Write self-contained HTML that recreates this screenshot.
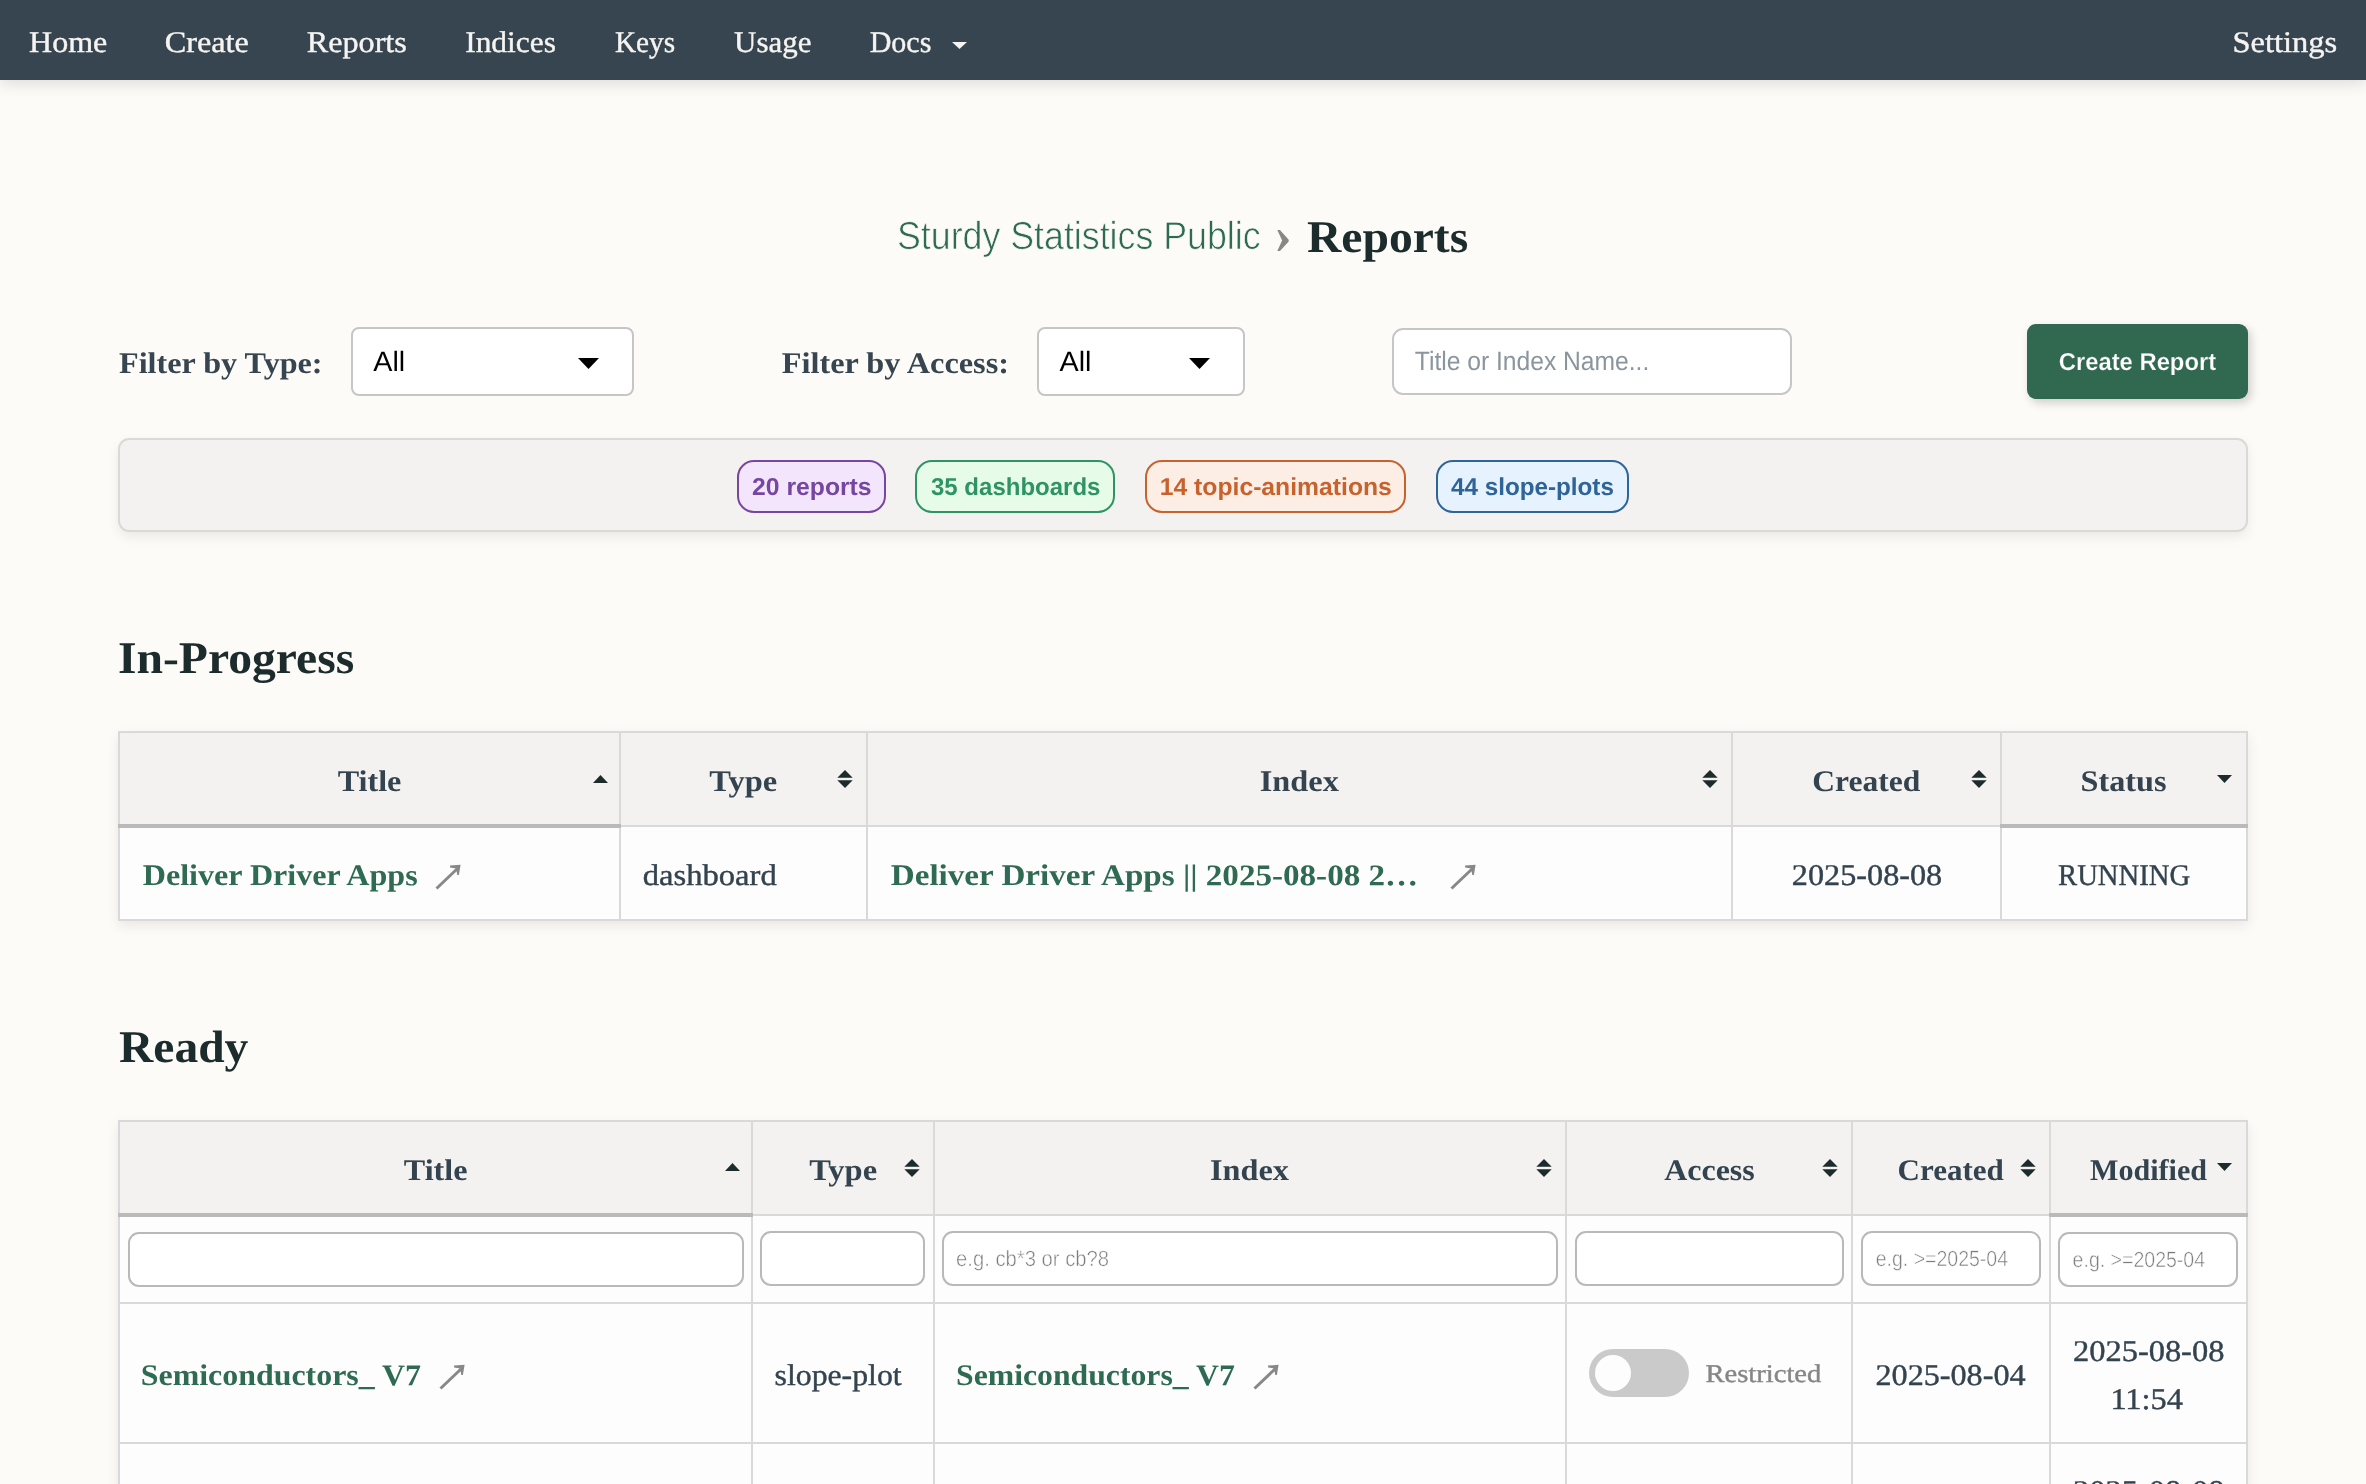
<!DOCTYPE html>
<html lang="en">
<head>
<meta charset="utf-8">
<title>Reports - Sturdy Statistics Public</title>
<style>
*{box-sizing:border-box;margin:0;padding:0}
html,body{width:2366px;height:1484px;overflow:hidden}
html{background:#fcfbf8}
body{background:transparent;will-change:transform;font-family:"Liberation Serif",serif;font-size:30px;color:#33434f;position:relative}
a{text-decoration:none;color:inherit}
.sans{font-family:"Liberation Sans",sans-serif}

/* NAV */
nav{position:absolute;left:0;top:0;width:2366px;height:80px;background:#36454f;box-shadow:0 4px 14px rgba(0,0,0,.12);color:#f6f4f1;z-index:5}
nav a{position:absolute;top:2px;line-height:80px;font-size:30px;white-space:nowrap;-webkit-text-stroke:0.4px #f6f4f1}
nav svg{position:absolute;left:952px;top:42px}

/* TITLE */
.crumb{position:absolute;left:0;top:200px;width:2366px;height:80px;font-weight:normal}
.crumb .org{position:absolute;left:897px;top:0.5px;line-height:70px;font-size:39px;color:#2e6b52;-webkit-text-stroke:0.7px #fcfbf8;font-family:"Liberation Sans",sans-serif;white-space:nowrap}
.crumb .chev{position:absolute;left:1274px;top:0px;line-height:70px;font-size:54px;color:#888;font-weight:bold}
.crumb .cur{position:absolute;left:1306px;top:1.7px;line-height:70px;font-size:45.3px;font-weight:bold;color:#1c2b2b;white-space:nowrap}

/* FILTERS */
.flabel{position:absolute;top:328.5px;line-height:68px;font-weight:bold;font-size:30px;color:#36454f;white-space:nowrap}
.select{position:absolute;top:327px;height:69px;border:2px solid #c6c6c6;border-radius:8px;background:#fff;font-family:"Liberation Sans",sans-serif;font-size:28px;color:#000;line-height:65px;padding-left:20px}
.select svg{position:absolute;top:29px}
.search{position:absolute;left:1392px;top:328px;width:400px;height:67px;border:2px solid #c6c6c6;border-radius:11px;background:#fff;font-family:"Liberation Sans",sans-serif;font-size:26.5px;color:#8a959d;line-height:63px;padding-left:21px;white-space:nowrap}
.btn{position:absolute;left:2027px;top:324px;width:221px;height:75px;border-radius:9px;background:#306850;color:#fff;font-family:"Liberation Sans",sans-serif;font-weight:bold;font-size:24.5px;line-height:75px;text-align:center;box-shadow:3px 4px 10px rgba(0,0,0,.18);white-space:nowrap;-webkit-text-stroke:0.2px #306850}

/* BADGE PANEL */
.panel{position:absolute;left:118px;top:438px;width:2130px;height:94px;border:2px solid #dad9d8;border-radius:11px;background:#f4f2f0;box-shadow:0 5px 12px rgba(0,0,0,.07)}
.badge{position:absolute;top:20px;height:53px;border:2px solid;border-radius:17px;font-family:"Liberation Sans",sans-serif;font-weight:bold;font-size:24.5px;line-height:49px;text-align:center;white-space:nowrap}
.b1{left:617px;width:149px;color:#7646a0;border-color:#7646a0;background:#f3e6fc}
.b2{left:795px;width:200px;color:#2f9464;border-color:#2f9464;background:#e6fce9}
.b3{left:1025px;width:261px;color:#c8622c;border-color:#c8622c;background:#fdeee5}
.b4{left:1316px;width:193px;color:#2f6497;border-color:#2f6497;background:#e6f2fe}

h2{position:absolute;left:118px;font-size:45.3px;font-weight:bold;color:#1c2b2b;line-height:60px;white-space:nowrap}

/* TABLES */
table{position:absolute;left:118px;width:2130px;border-collapse:separate;border-spacing:0;border-left:2px solid #d9d9d9;border-top:2px solid #d9d9d9;box-shadow:0 5px 12px rgba(0,0,0,.08);table-layout:fixed;background:#fdfdfd}
th,td{border-right:2px solid #d9d9d9;border-bottom:2px solid #d9d9d9;vertical-align:middle;position:relative;white-space:nowrap}
th{background:#f4f2f0;height:94px;padding-top:3px;font-weight:bold;font-size:30px;color:#33434f;text-align:center}
th.sorted::after{content:'';position:absolute;left:-2px;right:-2px;bottom:-3px;height:4px;background:#bababa;z-index:2}
th svg{position:absolute}
td{font-size:30px;color:#33434f;padding-top:4px;-webkit-text-stroke:0.4px #33434f}
td.l{text-align:left;padding-left:23px}
td.c{text-align:center}
td a{color:#2e6b52;font-weight:bold;font-size:30px;-webkit-text-stroke:0}
td svg.arr{position:absolute}
.finput{position:absolute;left:8px;right:8px;top:15px;height:55px;border:2px solid #b9b9b9;border-radius:11px;background:#fff;font-family:"Liberation Sans",sans-serif;font-size:22px;color:#7d7d7d;line-height:51px;padding-left:13px;text-align:left;-webkit-text-stroke:0.5px #fff}
.toggle{position:absolute;left:22px;top:45px;width:100px;height:48px;border-radius:24px;background:#cacaca}
.toggle i{position:absolute;left:6px;top:6px;width:36px;height:36px;border-radius:50%;background:#fdfdfd}
.tlabel{position:absolute;left:138px;top:1px;line-height:138px;color:#868686;font-size:25.5px;-webkit-text-stroke:0.4px #868686}
/*CAL*/
#n1{display:inline-block;transform-origin:left center;transform:translateX(0.1px) rotate(0.03deg) scaleX(1.0664)}
#n2{display:inline-block;transform-origin:left center;transform:translateX(-0.2px) rotate(0.03deg) scaleX(1.074)}
#n3{display:inline-block;transform-origin:left center;transform:translateX(-0.2px) rotate(0.03deg) scaleX(1.0714)}
#n4{display:inline-block;transform-origin:left center;transform:translateX(1.2px) rotate(0.03deg) scaleX(1.0471)}
#n5{display:inline-block;transform-origin:left center;transform:translateX(1.0px) rotate(0.03deg) scaleX(0.9747)}
#n6{display:inline-block;transform-origin:left center;transform:translateX(1.1px) rotate(0.03deg) scaleX(1.0308)}
#n7{display:inline-block;transform-origin:left center;transform:translateX(0.7px) rotate(0.03deg) scaleX(0.9992)}
#n8{display:inline-block;transform-origin:left center;transform:translateX(-0.5px) rotate(0.03deg) scaleX(1.0835)}
#org{display:inline-block;transform-origin:left center;transform:translateX(0.0px) rotate(0.03deg) scaleX(0.9166)}
#cur{display:inline-block;transform-origin:left center;transform:translateX(0.9px) rotate(0.03deg) scaleX(1.0511)}
#fl1{display:inline-block;transform-origin:left center;transform:translateX(1.0px) rotate(0.03deg) scaleX(1.0714)}
#fl2{display:inline-block;transform-origin:left center;transform:translateX(0.8px) rotate(0.03deg) scaleX(1.0764)}
#sel1{display:inline-block;transform-origin:left center;transform:translateX(0.3px) rotate(0.03deg) scaleX(1.023)}
#sel2{display:inline-block;transform-origin:left center;transform:translateX(0.5px) rotate(0.03deg) scaleX(1.0275)}
#ph{display:inline-block;transform-origin:left center;transform:translateX(-0.2px) rotate(0.03deg) scaleX(0.9292)}
#btn{display:inline-block;transform-origin:center center;transform:translateX(0.45px) rotate(0.03deg) scaleX(0.971)}
#bd1{display:inline-block;transform-origin:center center;transform:translateX(0.6px) rotate(0.03deg) scaleX(1.0085)}
#bd2{display:inline-block;transform-origin:center center;transform:translateX(0.25px) rotate(0.03deg) scaleX(0.9797)}
#bd3{display:inline-block;transform-origin:center center;transform:translateX(0.75px) rotate(0.03deg) scaleX(1.0089)}
#bd4{display:inline-block;transform-origin:center center;transform:translateX(0.1px) rotate(0.03deg) scaleX(0.989)}
#h2a{display:inline-block;transform-origin:left center;transform:translateX(0.0px) rotate(0.03deg) scaleX(1.0506)}
#t1h1{display:inline-block;transform-origin:center center;transform:translateX(-0.2px) rotate(0.03deg) scaleX(1.0724)}
#t1h2{display:inline-block;transform-origin:center center;transform:translateX(-0.1px) rotate(0.03deg) scaleX(1.082)}
#t1h3{display:inline-block;transform-origin:center center;transform:translateX(-0.4px) rotate(0.03deg) scaleX(1.0772)}
#t1h4{display:inline-block;transform-origin:center center;transform:translateX(-0.1px) rotate(0.03deg) scaleX(1.0507)}
#t1h5{display:inline-block;transform-origin:center center;transform:translateX(-0.45px) rotate(0.03deg) scaleX(1.0736)}
#t1a{display:inline-block;transform-origin:left center;transform:translateX(-0.2px) rotate(0.03deg) scaleX(1.0687)}
#t1b{display:inline-block;transform-origin:left center;transform:translateX(-1.2px) rotate(0.03deg) scaleX(1.0861)}
#t1c{display:inline-block;transform-origin:left center;transform:translateX(-0.2px) rotate(0.03deg) scaleX(1.1036)}
#t1d{display:inline-block;transform-origin:center center;transform:translateX(0.05px) rotate(0.03deg) scaleX(1.074)}
#t1e{display:inline-block;transform-origin:center center;transform:translateX(0.0px) rotate(0.03deg) scaleX(0.9563)}
#h2b{display:inline-block;transform-origin:left center;transform:translateX(1.0px) rotate(0.03deg) scaleX(1.0487)}
#t2h1{display:inline-block;transform-origin:center center;transform:translateX(-0.05px) rotate(0.03deg) scaleX(1.0705)}
#t2h2{display:inline-block;transform-origin:center center;transform:translateX(-0.3px) rotate(0.03deg) scaleX(1.0817)}
#t2h3{display:inline-block;transform-origin:center center;transform:translateX(-0.25px) rotate(0.03deg) scaleX(1.0742)}
#t2h4{display:inline-block;transform-origin:center center;transform:translateX(0.0px) rotate(0.03deg) scaleX(1.065)}
#t2h5{display:inline-block;transform-origin:center center;transform:translateX(-0.7px) rotate(0.03deg) scaleX(1.0341)}
#t2h6{display:inline-block;transform-origin:center center;transform:translateX(0.15px) rotate(0.03deg) scaleX(1.0028)}
#fp1{display:inline-block;transform-origin:left center;transform:translateX(-1.0px) rotate(0.03deg) scaleX(0.9202)}
#fp2{display:inline-block;transform-origin:left center;transform:translateX(-0.3px) rotate(0.03deg) scaleX(0.8867)}
#fp3{display:inline-block;transform-origin:left center;transform:translateX(-0.4px) rotate(0.03deg) scaleX(0.8877)}
#r1a,.c-r1a{display:inline-block;transform-origin:left center;transform:translateX(-2.2px) rotate(0.03deg) scaleX(1.0632)}
#r1b,.c-r1b{display:inline-block;transform-origin:left center;transform:translateX(0.6px) rotate(0.03deg) scaleX(1.0585)}
#r1c,.c-r1c{display:inline-block;transform-origin:left center;transform:translateX(-2.0px) rotate(0.03deg) scaleX(1.0574)}
#r1d,.c-r1d{display:inline-block;transform-origin:left center;transform:translateX(0.5px) rotate(0.03deg) scaleX(1.1202)}
#r1e,.c-r1e{display:inline-block;transform-origin:center center;transform:translateX(-0.45px) rotate(0.03deg) scaleX(1.0719)}
#r1f,.c-r1f{display:inline-block;transform-origin:center center;transform:translateX(-0.3px) rotate(0.03deg) scaleX(1.081)}
#r1g,.c-r1g{display:inline-block;transform-origin:center center;transform:translateX(-2.0px) rotate(0.03deg) scaleX(1.0777)}
/*ENDCAL*/
</style>
</head>
<body>

<nav>
  <a id="n1" href="#" style="left:29px">Home</a>
  <a id="n2" href="#" style="left:165px">Create</a>
  <a id="n3" href="#" style="left:307px">Reports</a>
  <a id="n4" href="#" style="left:464px">Indices</a>
  <a id="n5" href="#" style="left:614px">Keys</a>
  <a id="n6" href="#" style="left:733px">Usage</a>
  <a id="n7" href="#" style="left:869px">Docs</a>
  <svg width="15" height="8" viewBox="0 0 15 8"><path d="M0 0H15L7.5 7Z" fill="#f6f4f1"/></svg>
  <a id="n8" href="#" style="left:2233px">Settings</a>
</nav>

<h1 class="crumb">
  <a id="org" class="org" href="#">Sturdy Statistics Public</a>
  <span id="chev" class="chev">›</span>
  <span id="cur" class="cur">Reports</span>
</h1>

<label id="fl1" class="flabel" style="left:118px">Filter by Type:</label>
<div class="select" style="left:351px;width:283px"><span id="sel1">All</span><svg style="left:225px" width="21" height="11" viewBox="0 0 21 11"><path d="M0 0H21L10.5 11Z" fill="#000"/></svg></div>
<label id="fl2" class="flabel" style="left:781px">Filter by Access:</label>
<div class="select" style="left:1037px;width:208px"><span id="sel2">All</span><svg style="left:150px" width="21" height="11" viewBox="0 0 21 11"><path d="M0 0H21L10.5 11Z" fill="#000"/></svg></div>
<div class="search"><span id="ph">Title or Index Name...</span></div>
<a class="btn" href="#"><span id="btn">Create Report</span></a>

<div class="panel">
  <span class="badge b1"><span id="bd1">20 reports</span></span>
  <span class="badge b2"><span id="bd2">35 dashboards</span></span>
  <span class="badge b3"><span id="bd3">14 topic-animations</span></span>
  <span class="badge b4"><span id="bd4">44 slope-plots</span></span>
</div>

<h2 id="h2a" style="top:627.9px">In-Progress</h2>

<table id="t1" style="top:731px">
  <colgroup><col style="width:501px"><col style="width:247px"><col style="width:865px"><col style="width:269px"><col style="width:246px"></colgroup>
  <thead><tr>
    <th class="sorted"><span id="t1h1">Title</span><svg style="left:473px;top:42px" width="15" height="8" viewBox="0 0 15 8"><path d="M0 8H15L7.5 0Z" fill="#1c2b2b"/></svg></th>
    <th><span id="t1h2">Type</span><svg style="left:216px;top:37px" width="16" height="18" viewBox="0 0 16 18"><path d="M0.3 7.7H15.7L8 0ZM0.3 10.3H15.7L8 18Z" fill="#1c2b2b"/></svg></th>
    <th><span id="t1h3">Index</span><svg style="left:834px;top:37px" width="16" height="18" viewBox="0 0 16 18"><path d="M0.3 7.7H15.7L8 0ZM0.3 10.3H15.7L8 18Z" fill="#1c2b2b"/></svg></th>
    <th><span id="t1h4">Created</span><svg style="left:238px;top:37px" width="16" height="18" viewBox="0 0 16 18"><path d="M0.3 7.7H15.7L8 0ZM0.3 10.3H15.7L8 18Z" fill="#1c2b2b"/></svg></th>
    <th class="sorted"><span id="t1h5">Status</span><svg style="left:215px;top:42px" width="15" height="8" viewBox="0 0 15 8"><path d="M0 0H15L7.5 8Z" fill="#1c2b2b"/></svg></th>
  </tr></thead>
  <tbody><tr style="height:94px">
    <td class="l"><a id="t1a" href="#">Deliver Driver Apps</a><svg class="arr" style="left:315px;top:37px" width="27" height="27" viewBox="0 0 27 27"><path d="M1.5 24.5L22 5" stroke="#888" stroke-width="3" fill="none"/><path d="M25.6 0.8L15 1.6L15.1 3.4L21 4.4L22.3 11L23.9 10.9Z" fill="#888"/></svg></td>
    <td class="l"><span id="t1b">dashboard</span></td>
    <td class="l"><a id="t1c" href="#">Deliver Driver Apps || 2025-08-08 2…</a><svg class="arr" style="left:582px;top:37px" width="27" height="27" viewBox="0 0 27 27"><path d="M1.5 24.5L22 5" stroke="#888" stroke-width="3" fill="none"/><path d="M25.6 0.8L15 1.6L15.1 3.4L21 4.4L22.3 11L23.9 10.9Z" fill="#888"/></svg></td>
    <td class="c"><span id="t1d">2025-08-08</span></td>
    <td class="c"><span id="t1e">RUNNING</span></td>
  </tr></tbody>
</table>

<h2 id="h2b" style="top:1016.9px">Ready</h2>

<table id="t2" style="top:1120px">
  <colgroup><col style="width:633px"><col style="width:182px"><col style="width:632px"><col style="width:286px"><col style="width:198px"><col style="width:197px"></colgroup>
  <thead><tr>
    <th class="sorted"><span id="t2h1">Title</span><svg style="left:605px;top:41px" width="15" height="8" viewBox="0 0 15 8"><path d="M0 8H15L7.5 0Z" fill="#1c2b2b"/></svg></th>
    <th><span id="t2h2">Type</span><svg style="left:151px;top:37px" width="16" height="18" viewBox="0 0 16 18"><path d="M0.3 7.7H15.7L8 0ZM0.3 10.3H15.7L8 18Z" fill="#1c2b2b"/></svg></th>
    <th><span id="t2h3">Index</span><svg style="left:601px;top:37px" width="16" height="18" viewBox="0 0 16 18"><path d="M0.3 7.7H15.7L8 0ZM0.3 10.3H15.7L8 18Z" fill="#1c2b2b"/></svg></th>
    <th><span id="t2h4">Access</span><svg style="left:255px;top:37px" width="16" height="18" viewBox="0 0 16 18"><path d="M0.3 7.7H15.7L8 0ZM0.3 10.3H15.7L8 18Z" fill="#1c2b2b"/></svg></th>
    <th><span id="t2h5">Created</span><svg style="left:167px;top:37px" width="16" height="18" viewBox="0 0 16 18"><path d="M0.3 7.7H15.7L8 0ZM0.3 10.3H15.7L8 18Z" fill="#1c2b2b"/></svg></th>
    <th class="sorted"><span id="t2h6">Modified</span><svg style="left:166px;top:41px" width="15" height="8" viewBox="0 0 15 8"><path d="M0 0H15L7.5 8Z" fill="#1c2b2b"/></svg></th>
  </tr></thead>
  <tbody>
  <tr style="height:88px">
    <td><div class="finput" style="left:8px;right:7px;top:16px"></div></td>
    <td><div class="finput" style="left:7px;right:8px"></div></td>
    <td><div class="finput" style="left:7px;right:7px"><span id="fp1">e.g. cb*3 or cb?8</span></div></td>
    <td><div class="finput" style="left:8px;right:7px"></div></td>
    <td><div class="finput" style="left:8px;right:8px"><span id="fp2">e.g. &gt;=2025-04</span></div></td>
    <td><div class="finput" style="left:7px;right:8px;top:16px"><span id="fp3">e.g. &gt;=2025-04</span></div></td>
  </tr>
  <tr style="height:140px">
    <td class="l"><a id="r1a" href="#">Semiconductors_ V7</a><svg class="arr" style="left:319px;top:60px" width="27" height="27" viewBox="0 0 27 27"><path d="M1.5 24.5L22 5" stroke="#888" stroke-width="3" fill="none"/><path d="M25.6 0.8L15 1.6L15.1 3.4L21 4.4L22.3 11L23.9 10.9Z" fill="#888"/></svg></td>
    <td class="l" style="padding-left:21px"><span id="r1b">slope-plot</span></td>
    <td class="l"><a id="r1c" href="#">Semiconductors_ V7</a><svg class="arr" style="left:318px;top:60px" width="27" height="27" viewBox="0 0 27 27"><path d="M1.5 24.5L22 5" stroke="#888" stroke-width="3" fill="none"/><path d="M25.6 0.8L15 1.6L15.1 3.4L21 4.4L22.3 11L23.9 10.9Z" fill="#888"/></svg></td>
    <td><span class="toggle"><i></i></span><span id="r1d" class="tlabel">Restricted</span></td>
    <td class="c"><span id="r1e">2025-08-04</span></td>
    <td class="c" style="line-height:47.7px"><span id="r1f">2025-08-08</span><br><span id="r1g">11:54</span></td>
  </tr>
  <tr style="height:140px">
    <td class="l"><a class="c-r1a" href="#">Semiconductors_ V6</a></td>
    <td class="l" style="padding-left:21px"><span class="c-r1b">slope-plot</span></td>
    <td class="l"><a class="c-r1c" href="#">Semiconductors_ V6</a></td>
    <td><span class="toggle"><i></i></span><span class="tlabel c-r1d">Restricted</span></td>
    <td class="c"><span class="c-r1e">2025-08-04</span></td>
    <td class="c" style="line-height:47.7px"><span class="c-r1f">2025-08-08</span><br><span class="c-r1g">11:32</span></td>
  </tr>
  </tbody>
</table>

</body>
</html>
